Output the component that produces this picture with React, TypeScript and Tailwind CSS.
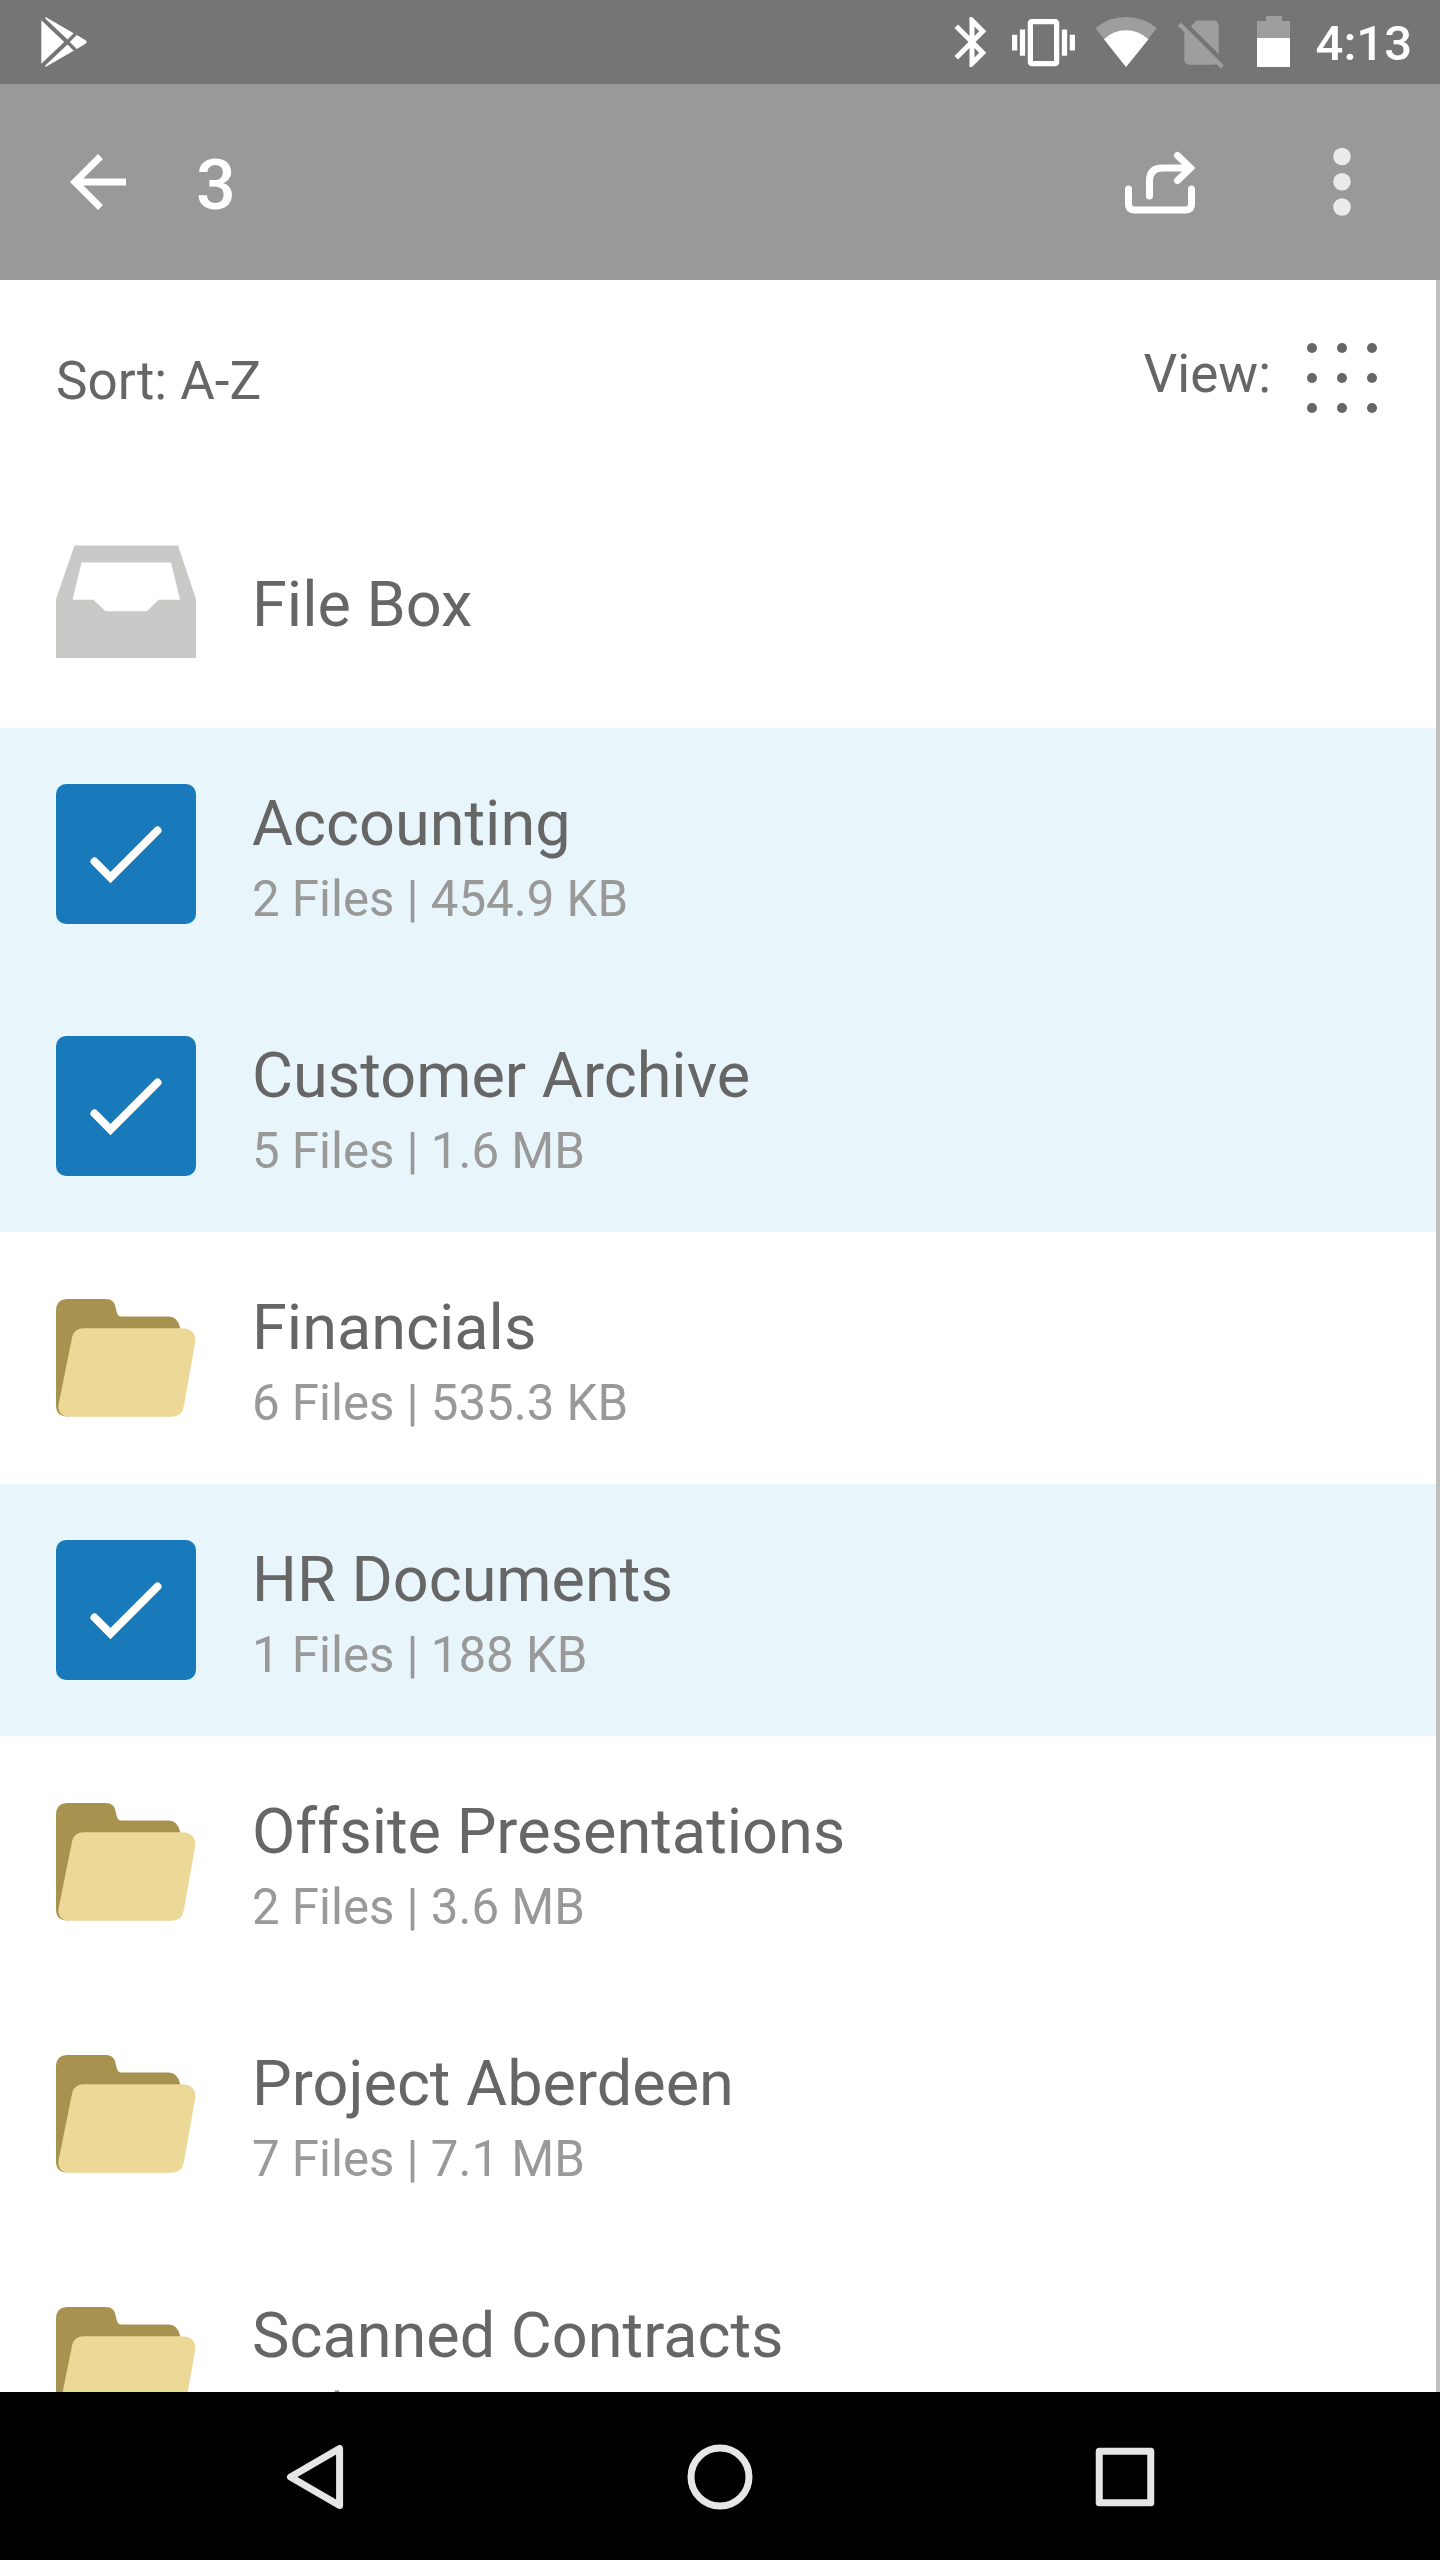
import React from 'react';

type Item = {
    name: string;
    meta?: string;
    kind: 'box' | 'folder';
    selected?: boolean;
};

const items: Item[] = [
    { name: 'File Box', kind: 'box' },
    { name: 'Accounting', meta: '2 Files | 454.9 KB', kind: 'folder', selected: true },
    { name: 'Customer Archive', meta: '5 Files | 1.6 MB', kind: 'folder', selected: true },
    { name: 'Financials', meta: '6 Files | 535.3 KB', kind: 'folder' },
    { name: 'HR Documents', meta: '1 Files | 188 KB', kind: 'folder', selected: true },
    { name: 'Offsite Presentations', meta: '2 Files | 3.6 MB', kind: 'folder' },
    { name: 'Project Aberdeen', meta: '7 Files | 7.1 MB', kind: 'folder' },
    { name: 'Scanned Contracts', meta: '3 Files | 1.8 MB', kind: 'folder' },
];

const StatusBar = () => (
    <div className="flex h-[84px] shrink-0 items-center bg-[#757575] pl-10 pr-7">
        <svg className="h-[52px] w-12" viewBox="40 16 48 52" fill="#fff">
            <path d="M41.3 20.3v43.4L64.2 42z" />
            <path d="M45.5 17l28.2 16.3-6.2 6.2L45.3 18.6z" />
            <path d="M45.5 67l28.2-16.3-6.2-6.2L45.3 65.4z" />
            <path d="M69.8 42l7-7 8.4 5q3 2 0 4l-8.4 5z" />
        </svg>
        <div className="ml-auto flex items-center">
            <svg className="mr-[10px] size-[60px]" viewBox="0 0 24 24" fill="#fff">
                <path d="M17.71 7.71L12 2h-1v7.59L6.41 5 5 6.41 10.59 12 5 17.59 6.41 19 11 14.41V22h1l5.71-5.71-4.3-4.29 4.3-4.29zM13 5.83l1.88 1.88L13 9.59V5.83zm1.88 10.46L13 18.17v-3.76l1.88 1.88z" />
            </svg>
            <svg className="mr-5 size-[63px]" viewBox="0 0 24 24" fill="#fff">
                <path d="M0 15h2V9H0v6zm3 2h2V7H3v10zm19-8v6h2V9h-2zm-3 8h2V7h-2v10zM16.5 3h-9C6.67 3 6 3.67 6 4.5v15c0 .83.67 1.5 1.5 1.5h9c.83 0 1.5-.67 1.5-1.5v-15c0-.83-.67-1.5-1.5-1.5zM16 19H8V5h8v14z" />
            </svg>
            <svg className="mr-[14px] h-[52px] w-[63px]" viewBox="1095 16 63 52">
                <path d="M1095.3 28Q1109 17 1126 17t30.9 11L1126 67z" fill="#9e9e9e" />
                <path d="M1104 39.3q9.5-9 22-9t22.5 9L1126 67z" fill="#fff" />
            </svg>
            <svg className="mr-[26px] size-[59px]" viewBox="0 0 24 24" fill="#9e9e9e">
                <path d="M18.99 5c0-1.1-.89-2-1.99-2h-7L7.66 5.34 19 16.68 18.99 5zM3.65 3.88L2.38 5.15 5 7.77V19c0 1.1.9 2 2 2h10.01c.35 0 .67-.1.96-.26l1.88 1.88 1.27-1.27L3.65 3.88z" />
            </svg>
            <svg className="mr-[26px] h-[52px] w-[33px]" viewBox="1257 16 33 52">
                <path d="M1257 21h9v-5h16v5h8v17h-33z" fill="#9e9e9e" />
                <path d="M1257 38h33v29h-33z" fill="#fff" />
            </svg>
            <span className="pt-[3px] text-[49px] leading-[60px] font-medium text-white">4:13</span>
        </div>
    </div>
);

const AppBar = () => (
    <div className="flex h-[196px] shrink-0 items-center bg-[#999999] pl-[70px] pr-[89px]">
        <svg className="size-14" viewBox="4 4 16 16" fill="#fff">
            <path d="M20 11H7.83l5.59-5.59L12 4l-8 8 8 8 1.41-1.41L7.83 13H20v-2z" />
        </svg>
        <span className="ml-[70px] pt-[5px] text-[70px] leading-[84px] font-medium text-white">3</span>
        <svg
            className="ml-auto h-[64px] w-[72px]"
            viewBox="1124 150 72 64"
            fill="none"
            stroke="#fff"
            strokeWidth="7"
            strokeLinecap="round"
        >
            <path d="M1128.5 189v15q0 6 6 6h51q6 0 6-6v-15" />
            <path d="M1149.5 196v-15q0-13 13-13h27" />
            <path d="M1177.5 155.5l13 12.5-13 12.5" strokeLinejoin="miter" />
        </svg>
        <svg className="ml-[137px] h-[70px] w-[18px]" viewBox="0 0 18 70" fill="#ebebeb">
            <circle cx="9" cy="9.5" r="8.8" />
            <circle cx="9" cy="34.7" r="8.8" />
            <circle cx="9" cy="60" r="8.8" />
        </svg>
    </div>
);

const Toolbar = () => (
    <div className="flex h-[196px] shrink-0 justify-between pl-14 pr-[59px] text-[53px] leading-[62px] text-[#666666]">
        <span className="pt-[70px]">Sort: A-Z</span>
        <div className="flex">
            <span className="pt-[63px]">View:</span>
            <div className="mt-[63px] ml-[36px] grid h-[70px] grid-cols-3 content-between gap-x-5">
                {Array.from({ length: 9 }, (_, i) => (
                    <span key={i} className="size-[10px] rounded-full bg-[#666666]" />
                ))}
            </div>
        </div>
    </div>
);

const BoxIcon = () => (
    <svg className="h-[140px] w-[140px]" viewBox="56 532 140 140">
        <path
            fill="#c9c9c8"
            fillRule="evenodd"
            d="M74.5 545.5h103.5l18 53.5v59H56v-59zM81.5 562.5l-9 37.3h21l12 11.4h41.5l11.5-11.4h21.5l-9-37.3z"
        />
    </svg>
);

const FolderIcon = () => (
    <svg className="h-[140px] w-[140px]" viewBox="56 1288 140 140">
        <path
            fill="#a89250"
            d="M56 1311q0-12 12-12h38q8 0 9.5 8l1.2 5q1 4.5 5 4.5h47q9 0 11.5 11.5L120 1370l-52 46.5q-12 0-12-11z"
        />
        <path
            fill="#ecd897"
            d="M84 1328.3h97q15 0 14.3 13.5l-11.5 64.5q-2 10.5-12 10.5H70q-12.5 0-11.5-12l13.5-67q1.8-9.5 12-9.5z"
        />
    </svg>
);

const Check = () => (
    <div className="size-[140px] rounded-[10px] bg-[#187abb]">
        <svg viewBox="0 0 140 140" fill="none" stroke="#fff" strokeWidth="8" strokeLinecap="round">
            <path d="M38.5 77.5l16 16L101.5 46.5" />
        </svg>
    </div>
);

const Row = ({ item }: { item: Item }) => (
    <div className={`flex h-[252px] shrink-0 items-center px-14 ${item.selected ? 'bg-[#e8f6fc]' : 'bg-white'}`}>
        {item.selected ? <Check /> : item.kind === 'box' ? <BoxIcon /> : <FolderIcon />}
        <div className={`ml-14 ${item.meta ? 'pt-3' : 'pt-1.5'}`}>
            <div className="text-[63px] leading-[74px] text-[#666666]">{item.name}</div>
            {item.meta && <div className="mt-[3px] text-[49.2px] leading-[70px] text-[#999999]">{item.meta}</div>}
        </div>
    </div>
);

const NavBar = () => (
    <div className="flex h-[168px] shrink-0 items-center justify-center gap-[339px] bg-black pt-px">
        <svg className="size-[66px]" viewBox="0 0 66 66" fill="none" stroke="#e6e6e6" strokeWidth="7" strokeLinejoin="round">
            <path d="M57.6 4.5v57L8.5 33z" />
        </svg>
        <svg className="size-[66px]" viewBox="0 0 66 66" fill="none" stroke="#e6e6e6" strokeWidth="7">
            <circle cx="33" cy="33" r="29" />
        </svg>
        <svg className="size-[66px]" viewBox="0 0 66 66" fill="none" stroke="#e6e6e6" strokeWidth="7" strokeLinejoin="round">
            <path d="M7.25 7.25h51.5v51.5h-51.5z" />
        </svg>
    </div>
);

const App = () => {
    return (
        <div className="flex h-[2560px] w-[1440px] flex-col overflow-hidden bg-white font-['Roboto',sans-serif]">
            <StatusBar />
            <AppBar />
            <div className="flex min-h-0 flex-1">
                <div className="flex flex-1 flex-col overflow-hidden">
                    <Toolbar />
                    {items.map((item) => (
                        <Row key={item.name} item={item} />
                    ))}
                </div>
                <div className="w-1 bg-[#bfbfbf]" />
            </div>
            <NavBar />
        </div>
    );
};

export default App;
